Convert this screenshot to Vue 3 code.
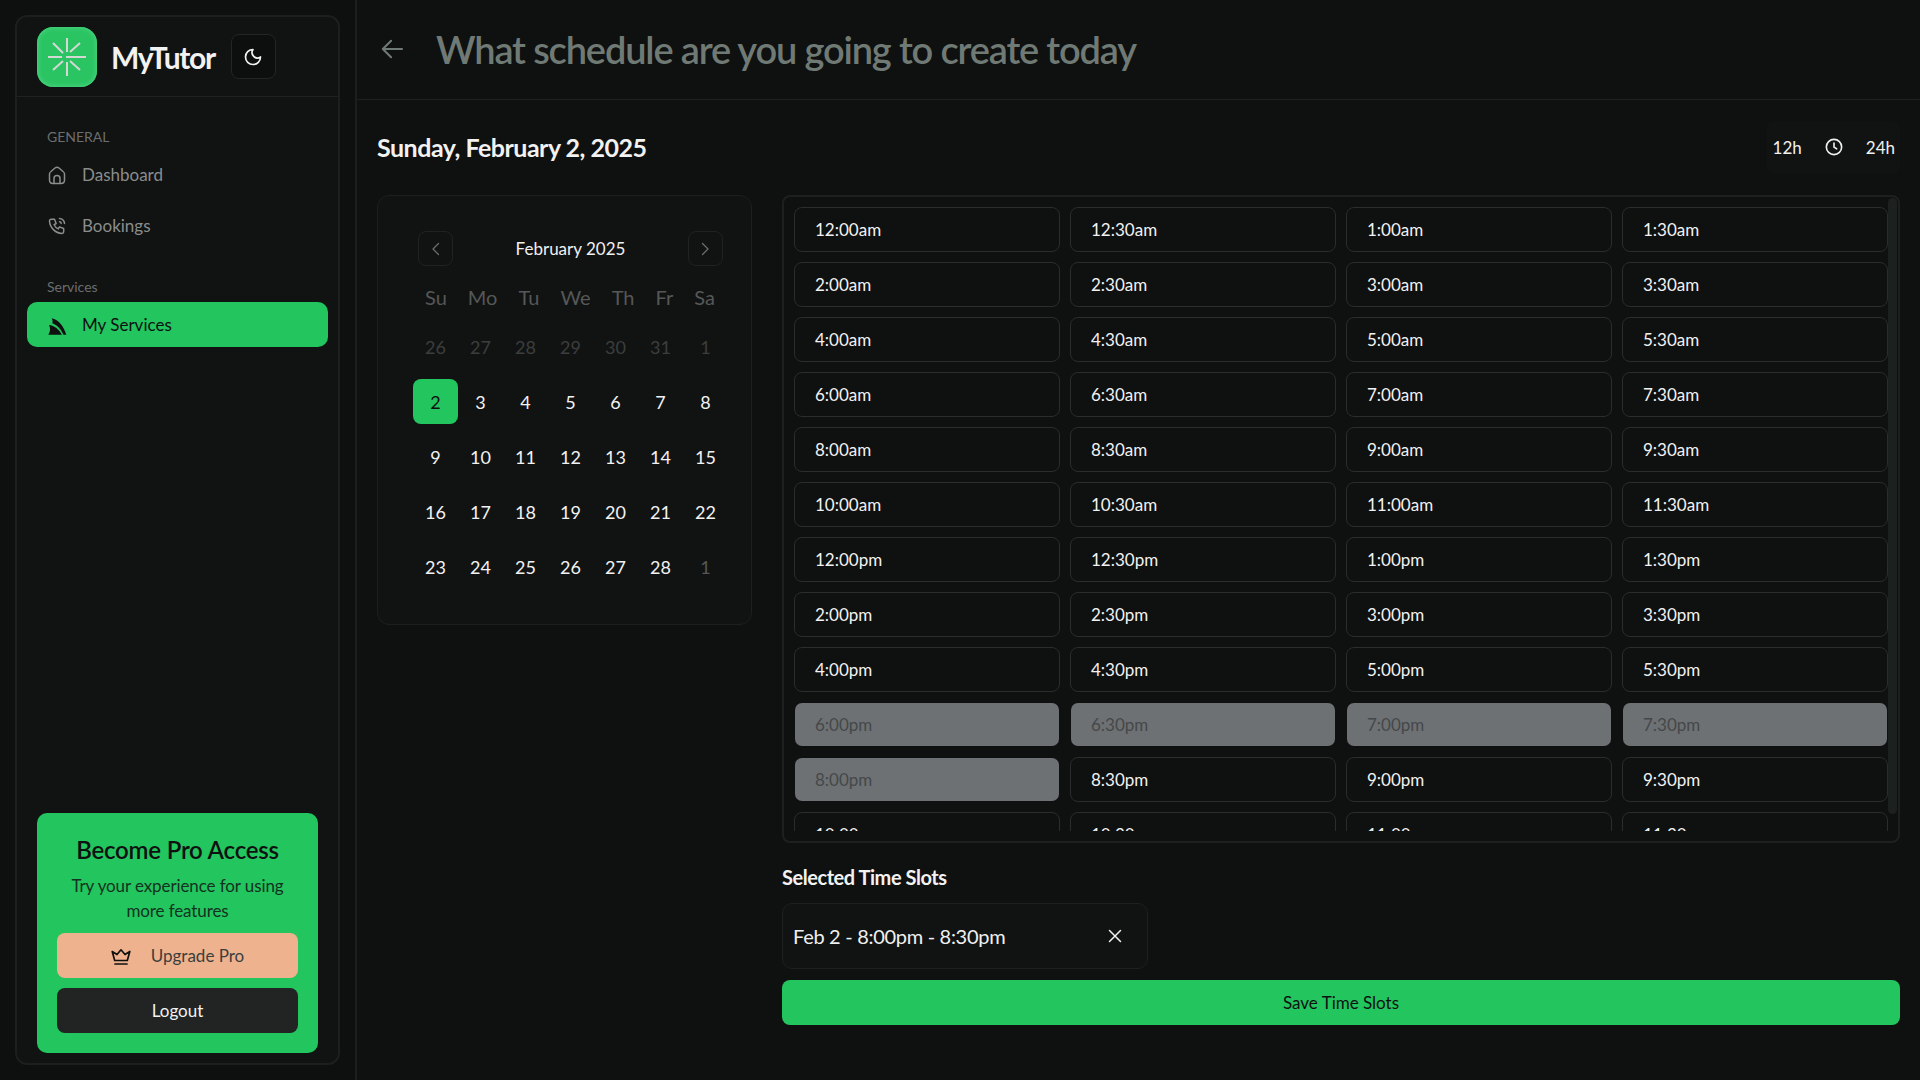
<script setup>
const weekdays = ['Su', 'Mo', 'Tu', 'We', 'Th', 'Fr', 'Sa']

const days = [
  { n: 26, off: true }, { n: 27, off: true }, { n: 28, off: true }, { n: 29, off: true }, { n: 30, off: true }, { n: 31, off: true }, { n: 1, off: true },
  { n: 2, sel: true }, { n: 3 }, { n: 4 }, { n: 5 }, { n: 6 }, { n: 7 }, { n: 8 },
  { n: 9 }, { n: 10 }, { n: 11 }, { n: 12 }, { n: 13 }, { n: 14 }, { n: 15 },
  { n: 16 }, { n: 17 }, { n: 18 }, { n: 19 }, { n: 20 }, { n: 21 }, { n: 22 },
  { n: 23 }, { n: 24 }, { n: 25 }, { n: 26 }, { n: 27 }, { n: 28 }, { n: 1, off: true, last: true }
]

// 48 half hour slots, only the first rows are visible in the panel
const slots = []
for (const suffix of ['am', 'pm']) {
  for (let h = 0; h < 12; h++) {
    for (const m of ['00', '30']) {
      slots.push(`${h === 0 ? 12 : h}:${m}${suffix}`)
    }
  }
}
const taken = ['6:00pm', '6:30pm', '7:00pm', '7:30pm', '8:00pm']
</script>

<template>
  <div class="layout">
    <aside class="side">
      <div class="side-card">
        <div class="brand">
          <div class="logo">
            <svg width="60" height="60" viewBox="0 0 60 60">
              <g stroke="#d3d8d5" stroke-width="2" fill="none">
                <path d="M30 11v14M30 35v14M11 30h14M29 30h20" />
                <path d="M16 16l10 10M43 16l-10 9M16 43l10-9M43 43l-10-9" />
              </g>
            </svg>
          </div>
          <span class="brand-name">MyTutor</span>
          <button class="theme-btn">
            <svg width="20" height="20" viewBox="0 0 24 24" fill="none" stroke="#f2f2f2" stroke-width="2" stroke-linecap="round" stroke-linejoin="round">
              <path d="M12 3a6.500 6.500 0 0 0 9 9 9 9 0 1 1-9-9z" />
            </svg>
          </button>
        </div>

        <nav class="nav">
          <div class="nav-label">GENERAL</div>
          <a class="nav-item first">
            <svg width="20" height="20" viewBox="0 0 20 20" fill="none" stroke="#8a8d8c" stroke-width="1.500" stroke-linejoin="round">
              <path d="M2.500 9Q2.500 7.500 4 6.500L8 3Q10 1.500 12 3L16 6.500Q17.500 7.500 17.500 9V15Q17.500 18.500 14 18.500H6Q2.500 18.500 2.500 15Z" />
              <path d="M7 18.500V13.500a3 3 0 0 1 6 0V18.500" />
            </svg>
            Dashboard
          </a>
          <a class="nav-item">
            <svg width="20" height="20" viewBox="0 0 24 24" fill="none" stroke="#8a8d8c" stroke-width="1.800" stroke-linecap="round" stroke-linejoin="round">
              <path d="M5 4h4l2 5-2.500 1.500a11 11 0 0 0 5 5l1.500-2.500 5 2v4a2 2 0 0 1-2 2A16 16 0 0 1 3 6a2 2 0 0 1 2-2" />
              <path d="M15 7a2 2 0 0 1 2 2M15 3a6 6 0 0 1 6 6" />
            </svg>
            Bookings
          </a>
          <div class="nav-label services">Services</div>
          <a class="nav-item active">
            <svg width="20" height="20" viewBox="0 0 20 20" fill="#0f1010">
              <path d="M4.700 3.200C11 4.500 16.500 10.500 19.300 19.800H16.500C14 14 10 10 5.300 8.300C6 6.500 5.500 5 4.700 3.200Z" />
              <path d="M2 10C7.500 10.500 12 14.500 15 19.800H1.300C3.500 16.500 3.500 13 2 10Z" />
            </svg>
            My Services
          </a>
        </nav>

        <div class="pro">
          <h3>Become Pro Access</h3>
          <p>Try your experience for using more features</p>
          <button class="upgrade">
            <svg width="20" height="20" viewBox="0 0 20 20" fill="none" stroke="#0f1010" stroke-width="1.700" stroke-linejoin="round" stroke-linecap="round">
              <path d="M3.700 14.500 1.200 5.500 6 8.500 10 3.800 14 8.500 18.800 5.500 16.300 14.500Z" />
              <path d="M4 18h12" />
            </svg>
            <span>Upgrade Pro</span>
          </button>
          <button class="logout">Logout</button>
        </div>
      </div>
    </aside>

    <main class="main">
      <header class="top">
        <svg class="back" width="22" height="22" viewBox="0 0 24 24" fill="none" stroke="#6f7a75" stroke-width="2.200" stroke-linecap="round" stroke-linejoin="round">
          <path d="M23 12H2M11 3l-9 9 9 9" />
        </svg>
        <h1>What schedule are you going to create today</h1>
      </header>

      <div class="content">
        <div class="date-row">
          <h2>Sunday, February 2, 2025</h2>
          <div class="format">
            <span>12h</span>
            <svg width="18" height="18" viewBox="0 0 20 20" fill="none" stroke="#f0f0f0" stroke-width="1.800" stroke-linecap="round" stroke-linejoin="round">
              <circle cx="10" cy="10" r="8.500" />
              <path d="M10 5.500V10l3 2" />
            </svg>
            <span>24h</span>
          </div>
        </div>

        <div class="columns">
          <section class="calendar">
            <div class="cal-head">
              <button class="cal-nav">
                <svg width="14" height="14" viewBox="0 0 14 14" fill="none" stroke="#6a6d6c" stroke-width="1.300" stroke-linecap="round" stroke-linejoin="round"><path d="M9.500 1.500 4 7l5.500 5.500" /></svg>
              </button>
              <span>February 2025</span>
              <button class="cal-nav">
                <svg width="14" height="14" viewBox="0 0 14 14" fill="none" stroke="#6a6d6c" stroke-width="1.300" stroke-linecap="round" stroke-linejoin="round"><path d="M4.500 1.500 10 7l-5.500 5.500" /></svg>
              </button>
            </div>
            <div class="wd-row">
              <span v-for="w in weekdays" :key="w">{{ w }}</span>
            </div>
            <div class="cal-grid">
              <div
                v-for="(d, i) in days"
                :key="i"
                class="day"
                :class="{ off: d.off, sel: d.sel, last: d.last }"
              >{{ d.n }}</div>
            </div>
          </section>

          <section class="right">
            <div class="panel">
              <div class="slots">
                <button
                  v-for="s in slots"
                  :key="s"
                  class="slot"
                  :class="{ taken: taken.includes(s) }"
                >{{ s }}</button>
              </div>
              <div class="thumb"></div>
            </div>

            <h4>Selected Time Slots</h4>
            <div class="chip">
              <span>Feb 2 - 8:00pm - 8:30pm</span>
              <svg width="14" height="14" viewBox="0 0 14 14" fill="none" stroke="#f0f0f0" stroke-width="1.500" stroke-linecap="round"><path d="M1.500 1.500l11 11M12.500 1.500l-11 11" /></svg>
            </div>
            <button class="save">Save Time Slots</button>
          </section>
        </div>
      </div>
    </main>
  </div>
</template>

<style>
html,
body {
  margin: 0;
  background: #0f1010;
}
</style>

<style scoped>
.layout {
  display: flex;
  width: 1920px;
  height: 1080px;
  overflow: hidden;
  background: #0f1010;
  color: #f0f0f0;
  font-family: Lato, "Open Sans", sans-serif;
  font-size: 17px;
}

button {
  font-family: inherit;
  cursor: pointer;
}

/* sidebar */
.side {
  width: 357px;
  flex-shrink: 0;
  box-sizing: border-box;
  padding: 15px;
  border-right: 2px solid #1b1e1d;
  background: #0e0f0f;
}

.side-card {
  box-sizing: border-box;
  height: 100%;
  display: flex;
  flex-direction: column;
  border: 2px solid #1c1f1e;
  border-radius: 12px;
  background: #111212;
}

.brand {
  height: 80px;
  flex-shrink: 0;
  display: flex;
  align-items: center;
  box-sizing: border-box;
  padding: 0 0 0 20px;
  border-bottom: 1px solid #1f2221;
}

.logo {
  width: 60px;
  height: 60px;
  border-radius: 16px;
  background: #2bc463;
  box-shadow: inset 0 0 4px 1px #4ad480;
}

.logo svg {
  display: block;
}

.brand-name {
  margin-left: 14px;
  width: 104px;
  font-size: 30px;
  font-weight: 700;
  color: #f2f2f2;
  letter-spacing: -1.3px;
  white-space: nowrap;
}

.theme-btn {
  width: 45px;
  height: 45px;
  margin-left: 16px;
  padding: 0 2px 0 0;
  display: flex;
  align-items: center;
  justify-content: center;
  background: #0d0e0e;
  border: 1px solid #232625;
  border-radius: 8px;
}

.nav {
  padding: 0 10px;
  display: flex;
  flex-direction: column;
}

.nav-label {
  margin-top: 29px;
  padding-left: 20px;
  height: 22px;
  line-height: 22px;
  font-size: 14px;
  color: #6b6e6d;
}

.nav-label.services {
  margin-top: 23px;
}

.nav-item {
  height: 45px;
  margin-bottom: 5px;
  display: flex;
  align-items: center;
  gap: 15px;
  padding-left: 20px;
  font-size: 17px;
  color: #8a8d8c;
  border-radius: 10px;
}

.nav-item.first {
  margin-top: 4px;
  margin-bottom: 6px;
}

.nav-item.active {
  margin-top: 4px;
  background: #22c55e;
  color: #0f1010;
}

.pro {
  margin: auto 20px 10px;
  padding: 20px;
  height: 240px;
  box-sizing: border-box;
  flex-shrink: 0;
  background: #22c55e;
  border-radius: 10px;
  color: #0f1010;
  text-align: center;
}

.pro h3 {
  margin: 0;
  font-size: 24px;
  line-height: 34px;
  font-weight: 600;
  letter-spacing: -0.2px;
}

.pro p {
  margin: 6px 0 10px;
  font-size: 17px;
  line-height: 25px;
  letter-spacing: -0.1px;
  color: #14321f;
}

.pro button {
  width: 100%;
  height: 45px;
  border: none;
  border-radius: 8px;
  font-size: 17px;
  display: flex;
  align-items: center;
  justify-content: center;
}

.upgrade {
  background: #eeb28e;
  color: #3a3f3d;
  gap: 20px;
}

.logout {
  margin-top: 10px;
  background: #212423;
  color: #f2f2f2;
}

/* main */
.main {
  flex: 1;
  min-width: 0;
  display: flex;
  flex-direction: column;
}

.top {
  height: 100px;
  box-sizing: border-box;
  flex-shrink: 0;
  display: flex;
  align-items: center;
  padding: 0 0 1px 24px;
  border-bottom: 1px solid #1f2221;
}

.top h1 {
  margin: 0 0 0 33px;
  font-size: 38px;
  font-weight: 600;
  color: #6f7a75;
  letter-spacing: -1.15px;
}

.content {
  padding: 19px 20px 0;
}

.date-row {
  display: flex;
  justify-content: space-between;
  align-items: center;
  height: 56px;
}

.date-row h2 {
  margin: 0;
  font-size: 25px;
  font-weight: 700;
  letter-spacing: -0.5px;
  color: #f2f2f2;
}

.format {
  display: flex;
  align-items: center;
  gap: 23px;
  height: 53px;
  padding: 0 5px 0 6px;
  border-radius: 8px;
  background: #111313;
}

.columns {
  display: flex;
  gap: 30px;
  margin-top: 20px;
}

/* calendar */
.calendar {
  width: 375px;
  height: 430px;
  box-sizing: border-box;
  flex-shrink: 0;
  padding: 35px 24px 0 35px;
  border: 1px solid #1c1f1e;
  border-radius: 12px;
  background: #111313;
}

.cal-head {
  display: flex;
  align-items: center;
  justify-content: space-between;
  padding: 0 4px 0 5px;
  height: 35px;
}

.cal-nav {
  width: 35px;
  height: 35px;
  padding: 0;
  display: flex;
  align-items: center;
  justify-content: center;
  background: transparent;
  border: 1px solid #1f2221;
  border-radius: 8px;
}

.wd-row {
  display: flex;
  justify-content: space-between;
  align-items: center;
  height: 34px;
  margin-top: 14px;
  padding: 0 12px 0 12px;
  font-size: 20px;
  color: #555857;
}

.cal-grid {
  display: grid;
  grid-template-columns: repeat(7, 45px);
  grid-auto-rows: 45px;
  row-gap: 10px;
  margin-top: 10px;
}

.day {
  display: flex;
  align-items: center;
  justify-content: center;
  border-radius: 8px;
  font-size: 18px;
  color: #f2f2f2;
}

.day.off {
  color: #3b3e3d;
}

.day.last {
  color: #555857;
}

.day.sel {
  background: #22c55e;
  color: #0f1010;
}

/* slots */
.right {
  flex: 1;
  min-width: 0;
}

.panel {
  position: relative;
  box-sizing: border-box;
  height: 648px;
  padding: 10px;
  border: 2px solid #1c2120;
  border-radius: 8px;
  background: #0f1010;
}

.slots {
  display: grid;
  grid-template-columns: repeat(4, 266px);
  grid-auto-rows: 45px;
  gap: 10px;
  height: 100%;
  overflow: hidden;
}

.slot {
  padding: 0 20px 1px;
  text-align: left;
  font-size: 17px;
  color: #f2f2f2;
  background: #0f1010;
  border: 1px solid #2a2d2c;
  border-radius: 8px;
}

.slot.taken {
  background: #6d7173;
  background-clip: padding-box;
  border-color: transparent;
  color: #45484a;
}

.thumb {
  position: absolute;
  top: 1px;
  right: 1px;
  width: 9px;
  height: 616px;
  border-radius: 5px;
  background: #1c2120;
}

.right h4 {
  margin: 20px 0 0;
  height: 29px;
  line-height: 29px;
  font-size: 20px;
  font-weight: 700;
  letter-spacing: -0.45px;
  color: #f2f2f2;
}

.chip {
  width: 366px;
  height: 66px;
  box-sizing: border-box;
  margin-top: 11px;
  display: flex;
  align-items: center;
  justify-content: space-between;
  padding: 0 25px 0 10px;
  font-size: 20px;
  letter-spacing: -0.3px;
  border: 1px solid #1d2020;
  border-radius: 10px;
  background: #111313;
}

.save {
  display: block;
  width: 100%;
  height: 45px;
  margin-top: 11px;
  border: none;
  border-radius: 8px;
  background: #22c55e;
  color: #0f1010;
  font-size: 17px;
}
</style>
